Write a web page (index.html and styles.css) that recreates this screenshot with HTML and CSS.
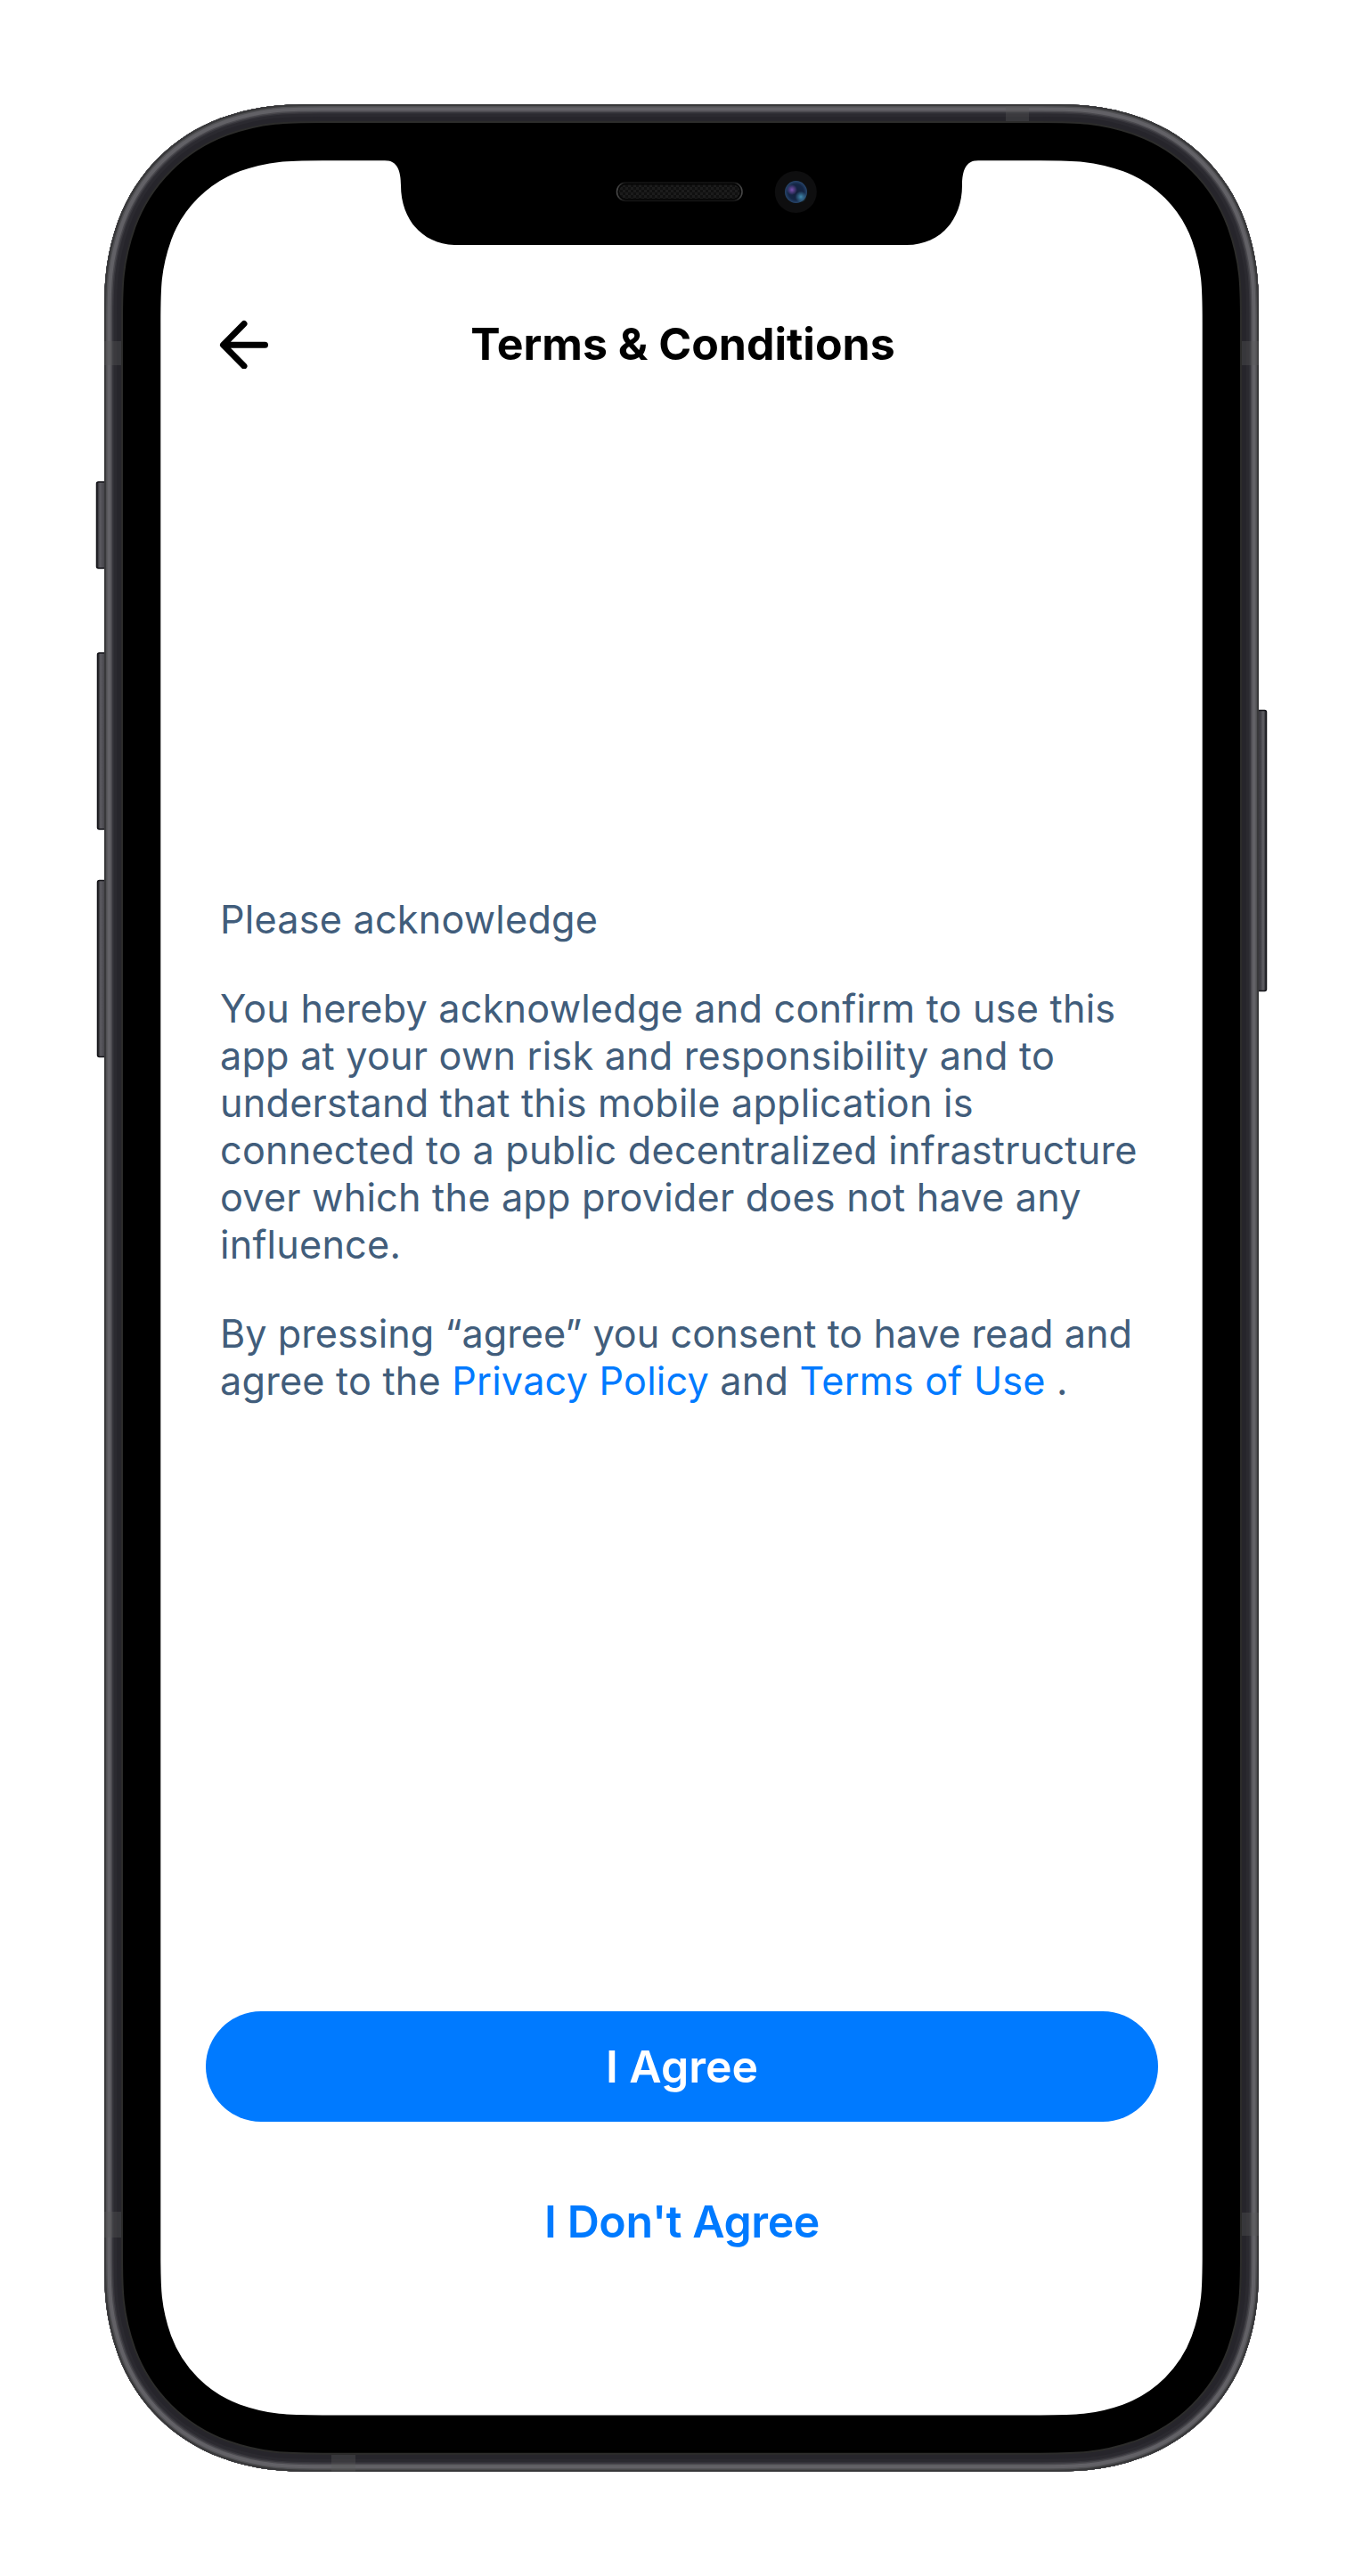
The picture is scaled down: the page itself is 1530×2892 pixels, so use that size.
FILE: index.html
```html
<!DOCTYPE html>
<html lang="en">
<head>
<meta charset="utf-8">
<title>Terms &amp; Conditions</title>
<link rel="stylesheet" href="styles.css">
</head>
<body>
<div class="phone">
  <svg class="frame" viewBox="0 0 1530 2892" aria-hidden="true">
    <defs>
      <path id="body" d="M117 362C117 322 117 292 132.600 248C152.200 194.500 194.500 152.200 248 132.600C292 117 322 117 362 117H1168C1208 117 1238 117 1282 132.600C1335.500 152.200 1377.800 194.500 1397.400 248C1413 292 1413 322 1413 362V2530C1413 2570 1413 2600 1397.400 2644C1377.800 2697.500 1335.500 2739.500 1282 2759.100C1238 2774.700 1208 2774.700 1168 2774.700H362C322 2774.700 292 2774.700 248 2759.100C194.500 2739.500 152.200 2697.500 132.600 2644C117 2600 117 2570 117 2530Z"/>
      <clipPath id="clip"><use href="#body"/></clipPath>
      <linearGradient id="key" x1="0" x2="1" y1="0" y2="0">
        <stop offset="0" stop-color="#17171c"/><stop offset=".25" stop-color="#5c5b61"/><stop offset=".5" stop-color="#4c4b51"/><stop offset="1" stop-color="#38373d"/>
      </linearGradient>
      <linearGradient id="keyRight" x1="0" x2="1" y1="0" y2="0">
        <stop offset="0" stop-color="#343339"/><stop offset=".5" stop-color="#3e3d43"/><stop offset=".75" stop-color="#626166"/><stop offset="1" stop-color="#17171c"/>
      </linearGradient>
      <radialGradient id="lens"><stop offset="0" stop-color="#14203c"/><stop offset=".7" stop-color="#142645"/><stop offset="1" stop-color="#27466c"/></radialGradient>
      <radialGradient id="violet"><stop offset="0" stop-color="#7a50ae"/><stop offset="1" stop-color="#7a50ae" stop-opacity="0"/></radialGradient>
      <radialGradient id="cyan"><stop offset="0" stop-color="#4189ad"/><stop offset="1" stop-color="#4189ad" stop-opacity="0"/></radialGradient>
      <linearGradient id="slot" x1="0" x2="1" y1="0" y2="0">
        <stop offset="0" stop-color="#4a4a4a"/><stop offset=".06" stop-color="#151515"/><stop offset=".94" stop-color="#151515"/><stop offset="1" stop-color="#4a4a4a"/>
      </linearGradient>
      <pattern id="mesh" width="6" height="6" patternUnits="userSpaceOnUse"><rect width="6" height="6" fill="#101010"/><path d="M0 0h3v3H0zM3 3h3v3H3z" fill="#1c1c1c"/></pattern>
    </defs>
    <g class="keys">
      <rect x="108.500" y="541" width="14" height="97" rx="2"/>
      <rect x="109.500" y="733" width="13" height="198" rx="2"/>
      <rect x="109.500" y="988.500" width="13" height="198" rx="2"/>
    </g>
    <rect class="key-right" x="1408" y="797.500" width="13.500" height="315" rx="2"/>
    <g clip-path="url(#clip)">
      <use class="rim glass" href="#body"/>
      <use class="rim lip" href="#body"/>
      <use class="rim steel" href="#body"/>
      <use class="rim steel-soft" href="#body"/>
      <use class="rim shade" href="#body"/>
      <use class="rim mid" href="#body"/>
      <use class="rim shine" href="#body"/>
      <use class="rim mid-edge" href="#body"/>
      <use class="rim edge" href="#body"/>
      <g class="bands">
        <path d="M117 383h19v27h-19zM1394 383h19v27h-19zM117 2483h19v29h-19zM1394 2484h19v26h-19zM1129 119h26v17h-26zM372 2756h27v19h-27z"/>
      </g>
    </g>
    <path class="notch" d="M420 170V180H432C446 180 450 192 450 208C450 248 476 275 512 275H1018C1054 275 1080 248 1080 208C1080 192 1084 180 1098 180H1110V170Z"/>
    <rect class="speaker" x="692.500" y="205" width="140.500" height="20.500" rx="10"/>
    <rect x="695" y="207.500" width="135.500" height="15.500" rx="7.500" fill="url(#mesh)"/>
    <circle cx="893.300" cy="215.500" r="23.500" fill="#0e0e0f"/>
    <circle cx="893.500" cy="215.500" r="12.500" fill="url(#lens)"/>
    <circle cx="889" cy="213" r="6" fill="url(#violet)"/>
    <circle cx="899" cy="221" r="6.500" fill="url(#cyan)"/>
  </svg>
  <main class="screen">
    <header class="bar">
      <button class="back" aria-label="Back">
        <svg class="arrow" viewBox="0 0 56 56"><path d="M28 5.500L4.500 29.300L28 53M6 29.300H51.500"/></svg>
      </button>
      <h1 class="title">Terms &amp; Conditions</h1>
    </header>
    <section class="copy">
      <p>Please acknowledge</p>
      <p>You hereby acknowledge and confirm to use this<br>app at your own risk and responsibility and to<br>understand that this mobile application is<br>connected to a public decentralized infrastructure<br>over which the app provider does not have any<br>influence.</p>
      <p><span class="tight">By pressing “agree” you consent to have read and</span><br>agree to the <a>Privacy Policy</a> and <a>Terms of Use</a> .</p>
    </section>
    <footer class="actions">
      <button class="button primary">I Agree</button>
      <button class="button plain">I Don't Agree</button>
    </footer>
  </main>
</div>
</body>
</html>
```
FILE: styles.css
```css
* { box-sizing: border-box; }
body { margin: 0; background: #fff; font-family: Inter, sans-serif; }
.phone { position: relative; width: 1530px; height: 2892px; padding: 180px 180px 180px 181px; }
.frame { position: absolute; inset: 0; width: 1530px; height: 2892px; }
.keys rect { fill: url(#key); stroke: #15151a; stroke-width: 1.500; }
.key-right { fill: url(#keyRight); stroke: #15151a; stroke-width: 1.500; }
.rim { fill: none; }
.glass { stroke: #000; stroke-width: 126.600; }
.lip { stroke: #2c2c2b; stroke-width: 42; }
.steel { stroke: #26252b; stroke-width: 38; }
.steel-soft { stroke: #2b2a30; stroke-width: 28; }
.shade { stroke: #37363c; stroke-width: 21; }
.mid { stroke: #4a494e; stroke-width: 18; }
.shine { stroke: #626166; stroke-width: 15; }
.mid-edge { stroke: #505053; stroke-width: 7; }
.edge { stroke: #38383a; stroke-width: 4; }
.bands { fill: #5a5a58; opacity: .35; }
.speaker { fill: #060606; stroke: url(#slot); stroke-width: 1.500; }
.screen { position: relative; display: flex; flex-direction: column; height: 2532px; }
.bar { display: grid; grid-template-columns: 121px 1fr 119px; align-items: center; height: 104px; margin-top: 154px; }
.back { padding: 0; border: 0; background: none; height: 56px; margin-left: 65px; width: 56px; }
.arrow { display: block; width: 56px; height: 56px; fill: none; stroke: #000; stroke-width: 7; stroke-linecap: round; stroke-linejoin: round; }
.title { margin: 0; text-align: center; font-size: 50px; font-weight: 700; line-height: 60px; white-space: nowrap; }
.copy { margin: 568px 0 0 66px; color: #415d7b; font-size: 43.2px; line-height: 53px; letter-spacing: .21px; white-space: nowrap; }
.copy p { margin: 0 0 47px; }
.copy a { color: #007aff; }
.tight { letter-spacing: .03px; }
.actions { display: flex; flex-direction: column; gap: 50px; margin: auto 50px 155.5px; }
.button { height: 124.5px; border: 0; border-radius: 63px; font: 600 50px/60px Inter, sans-serif; }
.primary { background: #007aff; color: #fff; }
.plain { background: none; color: #007aff; letter-spacing: -.4px; }
```
